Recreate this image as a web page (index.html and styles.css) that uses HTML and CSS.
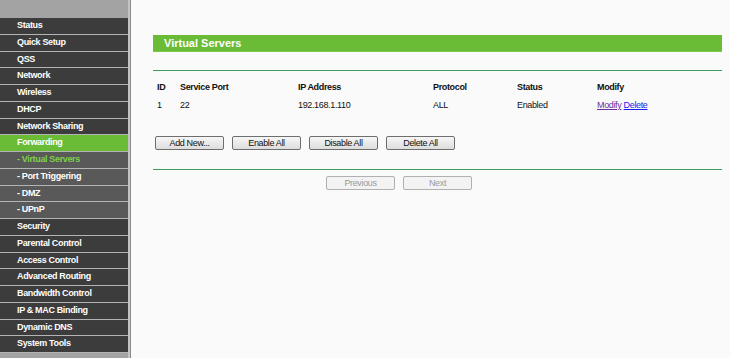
FILE: index.html
```html
<!DOCTYPE html>
<html lang="en">

<head>
    <meta charset="UTF-8">
    <title>Virtual Servers</title>
    <link rel="stylesheet" href="styles.css">
</head>

<body>
    <div class="page">
        <div class="menu">
            <ul>
                <li>Status</li>
                <li>Quick Setup</li>
                <li>QSS</li>
                <li>Network</li>
                <li>Wireless</li>
                <li>DHCP</li>
                <li>Network Sharing</li>
                <li class="open">Forwarding</li>
                <li class="sub active">- Virtual Servers</li>
                <li class="sub">- Port Triggering</li>
                <li class="sub">- DMZ</li>
                <li class="sub">- UPnP</li>
                <li>Security</li>
                <li>Parental Control</li>
                <li>Access Control</li>
                <li>Advanced Routing</li>
                <li>Bandwidth Control</li>
                <li>IP &amp; MAC Binding</li>
                <li>Dynamic DNS</li>
                <li>System Tools</li>
            </ul>
        </div>

        <div class="content">
            <div class="title">Virtual Servers</div>
            <div class="rule"></div>

            <table class="list">
                <tr>
                    <th class="c-id">ID</th>
                    <th class="c-port">Service Port</th>
                    <th class="c-ip">IP Address</th>
                    <th class="c-proto">Protocol</th>
                    <th class="c-status">Status</th>
                    <th>Modify</th>
                </tr>
                <tr>
                    <td>1</td>
                    <td>22</td>
                    <td>192.168.1.110</td>
                    <td>ALL</td>
                    <td>Enabled</td>
                    <td><a href="#" class="visited">Modify</a> <a href="#">Delete</a></td>
                </tr>
            </table>

            <div class="buttons">
                <button>Add New...</button>
                <button>Enable All</button>
                <button>Disable All</button>
                <button>Delete All</button>
            </div>

            <div class="rule low"></div>

            <div class="pager">
                <button disabled>Previous</button>
                <button disabled>Next</button>
            </div>
        </div>
    </div>
</body>

</html>
```

FILE: styles.css
```css
body {
    margin: 0;
    padding: 0;
    font-family: "Liberation Sans", Arial, sans-serif;
    font-size: 9px;
    letter-spacing: -0.35px;
    background-color: #fafafa;
}

.page {
    display: flex;
    height: 358px;
    overflow: hidden;
}

.menu {
    width: 128px;
    padding-top: 18px;
    background-color: #a3a3a3;
    border-right: 2px solid #c4c4c4;
    box-shadow: 1px 0 0 #8a8a8a;
    flex-shrink: 0;
}

.menu ul {
    list-style: none;
    margin: 0;
    padding: 0;
}

.menu li {
    height: 15.75px;
    line-height: 15.75px;
    border-bottom: 1px solid #b4b4b4;
    background-color: #3c3c3c;
    color: #fff;
    font-weight: bold;
    padding-left: 17px;
    white-space: nowrap;
}

.menu li.open {
    background-color: #6abb36;
}

.menu li.sub {
    background-color: #595959;
}

.menu li.active {
    color: #7ed248;
}

.content {
    flex: 1;
    padding: 35px 8px 0 22px;
    margin-left: 1px;
}

.title {
    height: 16px;
    line-height: 16px;
    background-color: #6abb36;
    border-bottom: 1px solid #7cc84c;
    color: #fff;
    font-size: 11px;
    letter-spacing: 0;
    font-weight: bold;
    padding-left: 11px;
}

.rule {
    height: 0;
    border-top: 1px solid #3f9a5e;
    margin-top: 18px;
}

.list {
    border-collapse: collapse;
    margin-top: 7px;
    color: #111;
}

.list th,
.list td {
    text-align: left;
    padding: 0 0 0 4px;
    height: 18px;
}

.list th {
    font-weight: bold;
}

.c-id {
    width: 19px;
}

.c-port {
    width: 114px;
}

.c-ip {
    width: 131px;
}

.c-proto {
    width: 80px;
}

.c-status {
    width: 76px;
}

.list a {
    color: #1a1aee;
}

.list a.visited {
    color: #6a2d9a;
}

.buttons {
    display: flex;
    gap: 8px;
    margin-top: 22px;
    padding-left: 2px;
}

.rule.low {
    margin-top: 19px;
}

button {
    width: 69px;
    height: 14px;
    padding: 0;
    font-family: "Liberation Sans", Arial, sans-serif;
    font-size: 9px;
    letter-spacing: -0.35px;
    color: #111;
    background: linear-gradient(#f6f6f6, #dddddd);
    border: 1px solid #6e6e6e;
    border-radius: 2px;
}

.pager {
    display: flex;
    gap: 8px;
    margin-top: 6px;
    padding-left: 173px;
}

.pager button {
    color: #9a9a9a;
    background: #f3f3f3;
    border-color: #b0b0b0;
}
```
